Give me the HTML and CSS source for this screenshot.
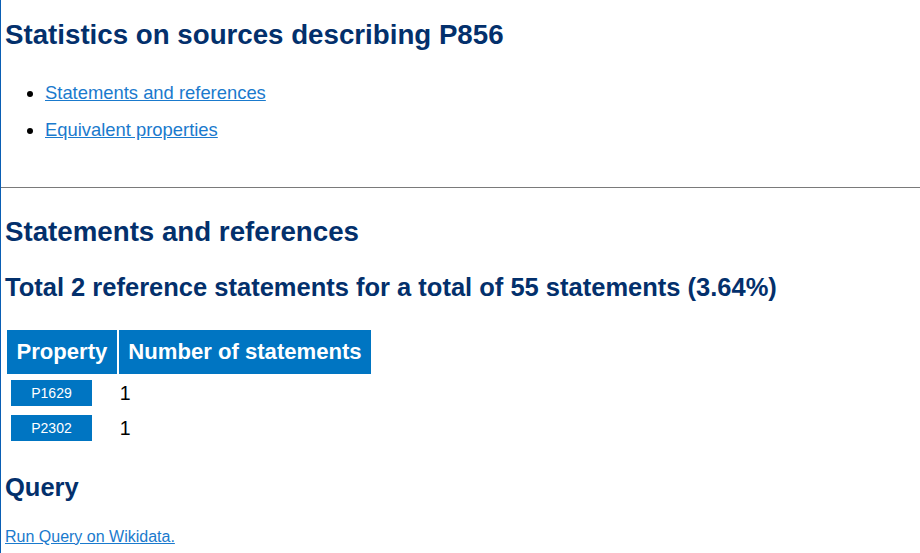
FILE: index.html
```html
<!DOCTYPE html>
<html>
<head>
<meta charset="utf-8">
<link rel="stylesheet" href="styles.css">
</head>
<body>
<section class="section">
  <h1 class="title">Statistics on sources describing P856</h1>
  <ul class="toc">
    <li><a href="#statements">Statements and references</a></li>
    <li><a href="#equivalent">Equivalent properties</a></li>
  </ul>
</section>
<hr class="divider">
<section class="section" id="statements">
  <h2 class="title">Statements and references</h2>
  <h3 class="subtitle">Total 2 reference statements for a total of 55 statements (3.64%)</h3>
  <table class="stats">
    <thead>
      <tr><th>Property</th><th>Number of statements</th></tr>
    </thead>
    <tbody>
      <tr><td><a class="badge" href="#">P1629</a></td><td class="num">1</td></tr>
      <tr><td><a class="badge" href="#">P2302</a></td><td class="num">1</td></tr>
    </tbody>
  </table>
  <h3 class="subtitle query-title">Query</h3>
  <a class="query" href="#">Run Query on Wikidata.</a>
</section>
</body>
</html>
```
FILE: styles.css
```css
html, body {
  margin: 0;
  padding: 0;
  background: #fff;
}
body {
  border-left: 1px solid #0a5eb4;
  min-height: 553px;
  box-sizing: border-box;
  font-family: "Liberation Sans", Arial, sans-serif;
  color: #000;
}
.section {
  padding: 0 4px;
}
.title {
  font-size: 27.7px;
  font-weight: bold;
  color: #03306c;
  margin: 0;
  line-height: 32px;
}
h1.title {
  padding-top: 19px;
}
h2.title {
  padding-top: 28px;
}
.subtitle {
  font-size: 25.5px;
  font-weight: bold;
  color: #03306c;
  margin: 24px 0 0;
  line-height: 30px;
}
.query-title {
  margin-top: 26px;
}
.toc {
  margin: 31px 0 0;
  padding-left: 40px;
  font-size: 18.4px;
}
.toc li {
  line-height: 21px;
  margin-bottom: 16px;
}
.toc a, .query {
  color: #1a7acd;
  text-decoration: underline;
}
.divider {
  margin: 47px 0 0;
  border: 0;
  border-top: 1px solid #7a7a7a;
  height: 0;
}
.stats {
  border-spacing: 2px;
  margin-top: 26px;
}
.stats th {
  background: #0075c2;
  color: #fff;
  font-size: 22.1px;
  font-weight: bold;
  padding: 0 9.5px;
  height: 44px;
  text-align: left;
}
.stats td {
  padding: 4px 4px 3px;
  font-size: 19.5px;
  line-height: 26px;
}
.stats td.num {
  padding-left: 1px;
}
.badge {
  display: block;
  background: #0075c2;
  color: #fff;
  font-size: 14px;
  width: 81px;
  height: 26px;
  line-height: 26px;
  text-align: center;
  text-decoration: none;
}
.query {
  display: inline-block;
  margin-top: 26px;
  font-size: 16px;
}
```
